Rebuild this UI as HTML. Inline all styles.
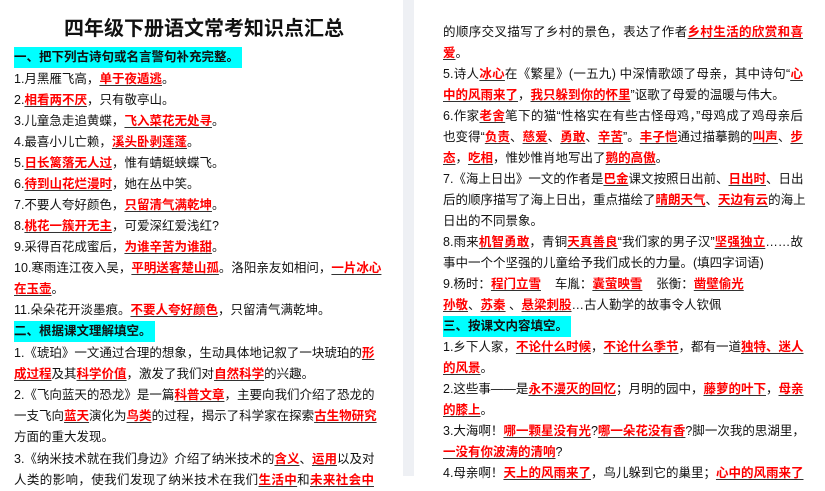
<!DOCTYPE html>
<html><head><meta charset="utf-8">
<style>
html,body{margin:0;padding:0;}
body{width:825px;height:476px;overflow:hidden;background:#fff;position:relative;font-family:"Liberation Sans","Noto Sans CJK SC",sans-serif;color:#111;}
.gap{position:absolute;left:403px;top:0;width:11px;height:476px;background:#eef0f4;}
.t{position:absolute;left:14px;top:14px;width:380px;text-align:center;font-size:20px;font-weight:bold;line-height:30px;}
.l{position:absolute;font-size:12.5px;line-height:21px;height:21px;white-space:nowrap;}
.L{left:14px;}
.R{left:443px;}
.j{width:360px;text-align:justify;text-align-last:justify;}
.r{color:#f00;font-weight:bold;text-decoration:underline;text-decoration-color:#333;text-underline-offset:2px;}
.h{background:#00ffff;font-weight:bold;padding-right:3px;}
</style></head><body>
<div class="gap"></div>
<div class="t">四年级下册语文常考知识点汇总</div>

<div class="l L" style="top:47px"><span class="h" style="display:inline-block;height:21px;">一、把下列古诗句或名言警句补充完整。</span></div>
<div class="l L" style="top:69px">1.月黑雁飞高，<span class="r">单于夜遁逃</span>。</div>
<div class="l L" style="top:90px">2.<span class="r">相看两不厌</span>，只有敬亭山。</div>
<div class="l L" style="top:111px">3.儿童急走追黄蝶，<span class="r">飞入菜花无处寻</span>。</div>
<div class="l L" style="top:132px">4.最喜小儿亡赖，<span class="r">溪头卧剥莲蓬</span>。</div>
<div class="l L" style="top:153px">5.<span class="r">日长篱落无人过</span>，惟有蜻蜓蛱蝶飞。</div>
<div class="l L" style="top:174px">6.<span class="r">待到山花烂漫时</span>，她在丛中笑。</div>
<div class="l L" style="top:195px">7.不要人夸好颜色，<span class="r">只留清气满乾坤</span>。</div>
<div class="l L" style="top:216px">8.<span class="r">桃花一簇开无主</span>，可爱深红爱浅红?</div>
<div class="l L" style="top:237px">9.采得百花成蜜后，<span class="r">为谁辛苦为谁甜</span>。</div>
<div class="l L j" style="top:258px">10.寒雨连江夜入吴，<span class="r">平明送客楚山孤</span>。洛阳亲友如相问，<span class="r">一片冰心</span></div>
<div class="l L" style="top:279px"><span class="r">在玉壶</span>。</div>
<div class="l L" style="top:300px">11.朵朵花开淡墨痕。<span class="r">不要人夸好颜色</span>，只留清气满乾坤。</div>
<div class="l L" style="top:321px"><span class="h" style="display:inline-block;height:21px;">二、根据课文理解填空。</span></div>
<div class="l L j" style="top:343px">1.《琥珀》一文通过合理的想象，生动具体地记叙了一块琥珀的<span class="r">形</span></div>
<div class="l L" style="top:364px"><span class="r">成过程</span>及其<span class="r">科学价值</span>，激发了我们对<span class="r">自然科学</span>的兴趣。</div>
<div class="l L j" style="top:385px">2.《飞向蓝天的恐龙》是一篇<span class="r">科普文章</span>，主要向我们介绍了恐龙的</div>
<div class="l L j" style="top:406px">一支飞向<span class="r">蓝天</span>演化为<span class="r">鸟类</span>的过程，揭示了科学家在探索<span class="r">古生物研究</span></div>
<div class="l L" style="top:427px">方面的重大发现。</div>
<div class="l L j" style="top:449px">3.《纳米技术就在我们身边》介绍了纳米技术的<span class="r">含义</span>、<span class="r">运用</span>以及对</div>
<div class="l L j" style="top:470px">人类的影响，使我们发现了纳米技术在我们<span class="r">生活中</span>和<span class="r">未来社会中</span></div>

<div class="l R j" style="top:22px">的顺序交叉描写了乡村的景色，表达了作者<span class="r">乡村生活的欣赏和喜</span></div>
<div class="l R" style="top:43px"><span class="r">爱</span>。</div>
<div class="l R j" style="top:64px">5.诗人<span class="r">冰心</span>在《繁星》(一五九) 中深情歌颂了母亲，其中诗句“<span class="r">心</span></div>
<div class="l R" style="top:85px"><span class="r">中的风雨来了</span>，<span class="r">我只躲到你的怀里</span>”讴歌了母爱的温暖与伟大。</div>
<div class="l R j" style="top:106px">6.作家<span class="r">老舍</span>笔下的猫“性格实在有些古怪母鸡，”母鸡成了鸡母亲后</div>
<div class="l R j" style="top:127px">也变得“<span class="r">负责</span>、<span class="r">慈爱</span>、<span class="r">勇敢</span>、<span class="r">辛苦</span>”。<span class="r">丰子恺</span>通过描摹鹅的<span class="r">叫声</span>、<span class="r">步</span></div>
<div class="l R" style="top:148px"><span class="r">态</span>，<span class="r">吃相</span>，惟妙惟肖地写出了<span class="r">鹅的高傲</span>。</div>
<div class="l R j" style="top:169px">7.《海上日出》一文的作者是<span class="r">巴金</span>课文按照日出前、<span class="r">日出时</span>、日出</div>
<div class="l R j" style="top:190px">后的顺序描写了海上日出，重点描绘了<span class="r">晴朗天气</span>、<span class="r">天边有云</span>的海上</div>
<div class="l R" style="top:211px">日出的不同景象。</div>
<div class="l R j" style="top:232px">8.雨来<span class="r">机智勇敢</span>，青铜<span class="r">天真善良</span>“我们家的男子汉”<span class="r">坚强独立</span>……故</div>
<div class="l R" style="top:253px">事中一个个坚强的儿童给予我们成长的力量。(填四字词语)</div>
<div class="l R" style="top:274px">9.杨时：<span class="r">程门立雪</span>&nbsp;&nbsp;&nbsp;&nbsp;车胤：<span class="r">囊萤映雪</span>&nbsp;&nbsp;&nbsp;&nbsp;张衡：<span class="r">凿壁偷光</span></div>
<div class="l R" style="top:295px"><span class="r">孙敬</span>、<span class="r">苏秦</span> 、<span class="r">悬梁刺股</span>…古人勤学的故事令人钦佩</div>
<div class="l R" style="top:316px"><span class="h" style="display:inline-block;height:21px;">三、按课文内容填空。</span></div>
<div class="l R j" style="top:337px">1.乡下人家，<span class="r">不论什么时候</span>，<span class="r">不论什么季节</span>，都有一道<span class="r">独特、迷人</span></div>
<div class="l R" style="top:358px"><span class="r">的风景</span>。</div>
<div class="l R j" style="top:379px">2.这些事——是<span class="r">永不漫灭的回忆</span>；月明的园中，<span class="r">藤萝的叶下</span>，<span class="r">母亲</span></div>
<div class="l R" style="top:400px"><span class="r">的膝上</span>。</div>
<div class="l R j" style="top:421px">3.大海啊！<span class="r">哪一颗星没有光</span>?<span class="r">哪一朵花没有香</span>?脚一次我的思湖里，</div>
<div class="l R" style="top:442px"><span class="r">一没有你波涛的清响</span>?</div>
<div class="l R j" style="top:463px">4.母亲啊！<span class="r">天上的风雨来了</span>，鸟儿躲到它的巢里；<span class="r">心中的风雨来了</span></div>
</body></html>
